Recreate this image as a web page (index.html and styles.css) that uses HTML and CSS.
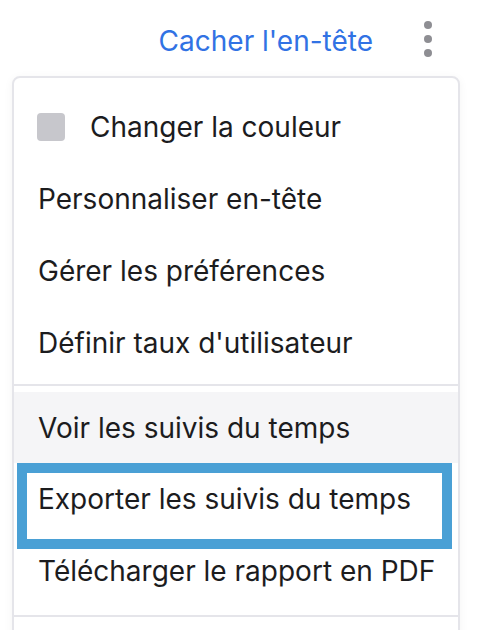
FILE: index.html
```html
<html>
<head>
    <meta charset="UTF-8">
    <title>Menu en-tête</title>
    <link rel="stylesheet" href="styles.css">
</head>

<body>
    <div class="topbar">
        <a class="hide-link" href="#">Cacher l'en-tête</a>
        <div class="more">
            <span class="dot"></span>
            <span class="dot"></span>
            <span class="dot"></span>
        </div>
    </div>

    <div class="menu">
        <div class="section first">
            <div class="item"><span class="swatch"></span>Changer la couleur</div>
            <div class="item">Personnaliser en-tête</div>
            <div class="item">Gérer les préférences</div>
            <div class="item">Définir taux d'utilisateur</div>
        </div>
        <div class="section second">
            <div class="item hover">Voir les suivis du temps</div>
            <div class="item marked">Exporter les suivis du temps<span class="mark"></span></div>
            <div class="item">Télécharger le rapport en PDF</div>
        </div>
        <div class="section last"></div>
    </div>
</body>
</html>
```

FILE: styles.css
```css
body {
    margin: 0;
    background: #ffffff;
    font-family: Inter, "Noto Sans", sans-serif;
    color: #1c1c1e;
}

.topbar {
    display: flex;
    justify-content: flex-end;
    align-items: center;
    height: 76px;
    padding-right: 52px;
    gap: 51px;
}

.hide-link {
    color: #3172e4;
    font-size: 28px;
    text-decoration: none;
    margin-top: 6px;
}

.more {
    display: flex;
    flex-direction: column;
    gap: 6px;
    margin-top: 2px;
}

.dot {
    width: 8px;
    height: 8px;
    border-radius: 50%;
    background: #8e8e93;
}

.menu {
    margin-left: 12px;
    width: 444px;
    border: 2px solid #e5e5ea;
    border-radius: 8px;
    box-shadow: 0 2px 10px rgba(0, 0, 0, 0.05);
    background: #ffffff;
}

.section {
    border-bottom: 2px solid #e5e5ea;
}

.section.first {
    padding: 13px 0 5px;
}

.section.second {
    padding: 6px 0 8px;
}

.section.last {
    border-bottom: none;
    height: 60px;
}

.item {
    position: relative;
    display: flex;
    align-items: center;
    height: 72px;
    padding-left: 24px;
    font-size: 28px;
}

.item.hover {
    height: 71px;
    background: #f5f5f7;
}

.swatch {
    width: 28px;
    height: 28px;
    border-radius: 4px;
    background: #c7c7cc;
    margin-left: -1px;
    margin-right: 25px;
}

.mark {
    position: absolute;
    top: 0;
    left: 3px;
    right: 6px;
    height: 66px;
    border: 10px solid #4aa0d5;
}
```
